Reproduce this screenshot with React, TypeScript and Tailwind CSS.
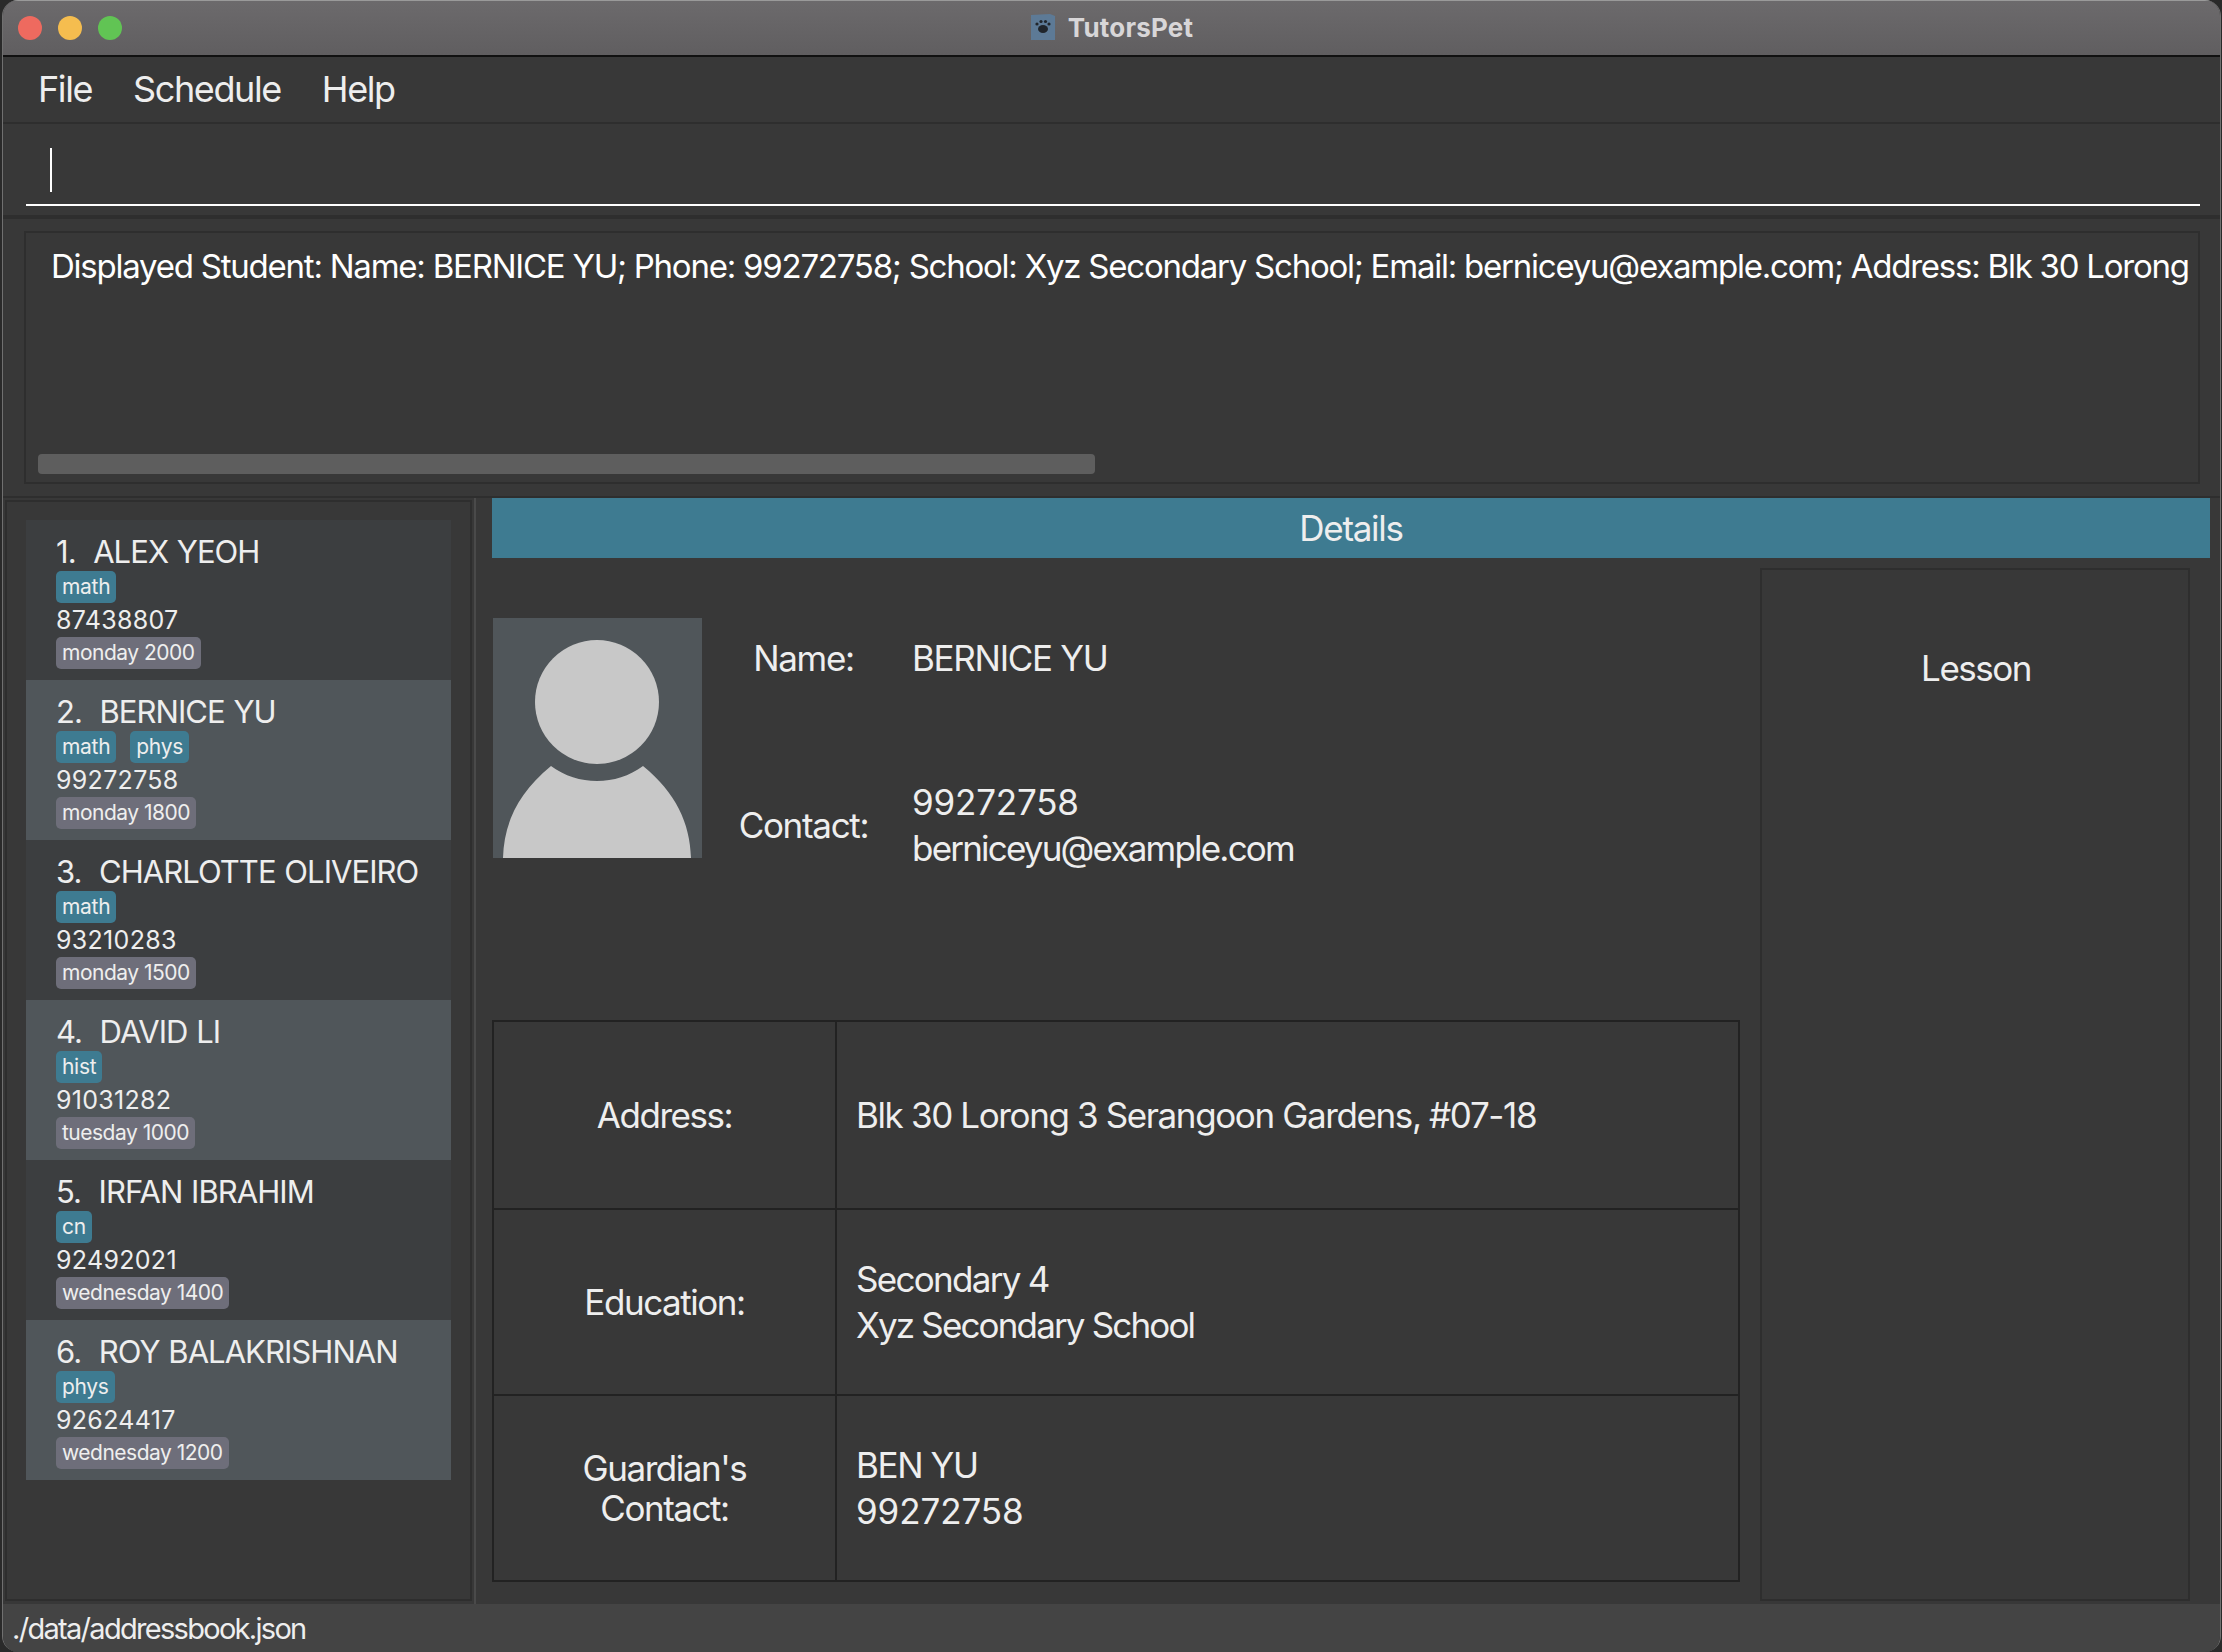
import React from 'react'

type Student = { name: string; tags: string[]; phone: string; slot: string }
type Line = { text: string; cls: string }

const STUDENTS: Student[] = [
  { name: '1.  ALEX YEOH', tags: ['math'], phone: '87438807', slot: 'monday 2000' },
  { name: '2.  BERNICE YU', tags: ['math', 'phys'], phone: '99272758', slot: 'monday 1800' },
  { name: '3.  CHARLOTTE OLIVEIRO', tags: ['math'], phone: '93210283', slot: 'monday 1500' },
  { name: '4.  DAVID LI', tags: ['hist'], phone: '91031282', slot: 'tuesday 1000' },
  { name: '5.  IRFAN IBRAHIM', tags: ['cn'], phone: '92492021', slot: 'wednesday 1400' },
  { name: '6.  ROY BALAKRISHNAN', tags: ['phys'], phone: '92624417', slot: 'wednesday 1200' },
]

const ROWS: { label: string[]; value: Line[]; height: string }[] = [
  {
    label: ['Address:'],
    value: [{ text: 'Blk 30 Lorong 3 Serangoon Gardens, #07-18', cls: 'tracking-[-1.38px]' }],
    height: 'h-[186px]',
  },
  {
    label: ['Education:'],
    value: [
      { text: 'Secondary 4', cls: 'tracking-[-1.7px]' },
      { text: 'Xyz Secondary School', cls: 'tracking-[-1.85px]' },
    ],
    height: 'h-[186px]',
  },
  {
    label: ["Guardian's", 'Contact:'],
    value: [
      { text: 'BEN YU', cls: 'tracking-[-1.4px]' },
      { text: '99272758', cls: 'tracking-[-0.1px]' },
    ],
    height: 'h-[186px]',
  },
]

function StudentCard({ s, i }: { s: Student; i: number }) {
  return (
    <div className={`h-[160px] pl-[30px] pt-[14px] ${i % 2 === 0 ? 'bg-[#3c3e40]' : 'bg-[#50565a]'}`}>
      <div className="h-[36px] whitespace-pre text-[31px] leading-[36px] tracking-[-0.95px] [word-spacing:1px] text-[#eeeeee]">{s.name}</div>
      <div className="mt-px flex gap-[14px]">
        {s.tags.map((t) => (
          <span key={t} className="flex h-[32px] items-center rounded-[5px] bg-[#3e7b91] px-[6px] text-[21px] tracking-[-0.3px] text-[#eeeeee]">{t}</span>
        ))}
      </div>
      <div className="h-[34px] text-[25px] leading-[34px] tracking-[0.3px] text-[#eeeeee]">{s.phone}</div>
      <div className="flex">
        <span className="flex h-[32px] items-center rounded-[5px] bg-[#6e6e7a] px-[6px] text-[21px] tracking-[-0.5px] text-[#eeeeee]">{s.slot}</span>
      </div>
    </div>
  )
}

function Avatar() {
  return (
    <svg width="209" height="240" viewBox="0 0 209 240" className="ml-px shrink-0">
      <rect width="209" height="240" fill="#50565a" />
      <circle cx="104" cy="84" r="62" fill="#c8c8c8" />
      <path d="M10 240 C11 205 25 175 58 148 C85 168 123 168 150 148 C183 175 197 205 198 240 Z" fill="#c8c8c8" />
    </svg>
  )
}

function AppIcon() {
  return (
    <svg width="26" height="28" viewBox="0 0 26 28">
      <path d="M1 2 L20 1 L25 3 L25 27 L1 27 Z" fill="#5d7a96" />
      <ellipse cx="13" cy="16" rx="5" ry="4" fill="#20252b" />
      <circle cx="7" cy="11" r="1.6" fill="#20252b" />
      <circle cx="11" cy="8.5" r="1.6" fill="#20252b" />
      <circle cx="15.5" cy="8.5" r="1.6" fill="#20252b" />
      <circle cx="19" cy="11" r="1.6" fill="#20252b" />
    </svg>
  )
}

export default function App() {
  return (
    <div className="h-[1652px] w-[2222px] bg-[#2a2a2a] pl-[2px] pr-px font-['Inter',sans-serif]">
      <div className="flex h-full flex-col overflow-hidden rounded-[16px] border-x border-x-[#707070] bg-[#383838]">
        {/* title bar */}
        <div className="relative flex h-[57px] shrink-0 items-center justify-center border-b-2 border-t border-b-[#111111] border-t-[#9a9a9a] bg-gradient-to-b from-[#6c6a6c] to-[#605e60] pb-[2px]">
          <div className="absolute left-[15px] top-[15px] flex gap-[16px]">
            <span className="h-[24px] w-[24px] rounded-full bg-[#ee6a5f]" />
            <span className="h-[24px] w-[24px] rounded-full bg-[#f5bd4f]" />
            <span className="h-[24px] w-[24px] rounded-full bg-[#61c454]" />
          </div>
          <div className="flex items-center gap-[12px]">
            <AppIcon />
            <span className="text-[26px] font-bold tracking-[0.2px] text-[#d8d6d8]">TutorsPet</span>
          </div>
        </div>

        {/* menu */}
        <div className="flex h-[67px] shrink-0 items-center gap-[41px] border-b-2 border-b-[#2e2e2e] pb-[2px] pl-[35px] text-[36px] tracking-[-1.4px] text-[#eeeeee]">
          <span>File</span>
          <span>Schedule</span>
          <span>Help</span>
        </div>

        {/* command box */}
        <div className="h-[95px] shrink-0 border-b-4 border-b-[#2e2e2e] pl-[23px] pr-[20px] pt-[24px]">
          <div className="h-[58px] border-b-2 border-b-[#ffffff] pl-[24px]">
            <div className="h-[44px] w-[2px] bg-[#ffffff]" />
          </div>
        </div>

        {/* result display */}
        <div className="h-[279px] shrink-0 border-b-2 border-b-[#2e2e2e] pl-[21px] pr-[20px] pt-[12px]">
          <div className="flex h-[253px] flex-col justify-between border-2 border-[#2e2e2e] pb-[8px] pl-[12px] pt-[13px]">
            <div className="whitespace-nowrap pl-[13px] text-[33px] leading-[40px] tracking-[-1.23px] text-[#ffffff]">
              Displayed Student: Name: BERNICE YU; Phone: 99272758; School: Xyz Secondary School; Email: berniceyu@example.com; Address: Blk 30 Lorong
            </div>
            <div className="h-[20px] w-[1057px] rounded-[4px] bg-[#5e5e5e]" />
          </div>
        </div>

        {/* main */}
        <div className="flex min-h-0 flex-1 bg-[#383838]">
          <div className="mb-[3px] ml-[2px] mt-[2px] w-[467px] shrink-0 border-2 border-[#2e2e2e] px-[19px] pt-[18px]">
            {STUDENTS.map((s, i) => (
              <StudentCard key={s.name} s={s} i={i} />
            ))}
          </div>
          <div className="ml-[2px] w-[2px] shrink-0 bg-[#4a4a4a]" />
          <div className="ml-[16px] flex w-[1718px] shrink-0 flex-col">
            <div className="flex h-[60px] shrink-0 items-center justify-center bg-[#3e7b91] text-[35px] tracking-[-1.3px] text-[#eeeeee]">Details</div>
            <div className="mt-[10px] flex min-h-0 flex-1">
              <div className="w-[1248px] shrink-0 pt-[50px]">
                <div className="flex h-[240px]">
                  <Avatar />
                  <div className="flex flex-col text-[35px] text-[#eeeeee]">
                    <div className="flex h-[80px] shrink-0 items-center">
                      <div className="w-[203px] text-center tracking-[-1.3px]">Name:</div>
                      <div className="pl-[7px] tracking-[-1.3px]">BERNICE YU</div>
                    </div>
                    <div className="mt-[80px] flex h-[94px] shrink-0 items-center">
                      <div className="w-[203px] text-center tracking-[-1.3px]">Contact:</div>
                      <div className="pl-[7px] leading-[46px]">
                        <div className="tracking-[-0.2px]">99272758</div>
                        <div className="tracking-[-1.8px]">berniceyu@example.com</div>
                      </div>
                    </div>
                  </div>
                </div>
                <div className="mt-[162px] border-2 border-[#222222] text-[35px] text-[#eeeeee]">
                  {ROWS.map((r, i) => (
                    <div key={r.label[0]} className={`flex ${r.height} ${i > 0 ? 'border-t-2 border-t-[#222222]' : ''}`}>
                      <div className="flex w-[343px] shrink-0 flex-col items-center justify-center border-r-2 border-r-[#222222] leading-[40px] tracking-[-1.45px]">
                        {r.label.map((l) => <div key={l}>{l}</div>)}
                      </div>
                      <div className="flex flex-col justify-center pl-[19px] leading-[46px]">
                        {r.value.map((v) => <div key={v.text} className={v.cls}>{v.text}</div>)}
                      </div>
                    </div>
                  ))}
                </div>
              </div>
              <div className="mb-[3px] ml-[20px] w-[430px] shrink-0 border-2 border-[#2e2e2e] pl-[2px] pt-[76px] text-center text-[35px] leading-[44px] tracking-[-1.5px] text-[#eeeeee]">
                Lesson
              </div>
            </div>
          </div>
        </div>

        {/* status bar */}
        <div className="flex h-[48px] shrink-0 items-center bg-[#444444] pl-[9px] pt-[2px] text-[29px] tracking-[-1.7px] text-[#eeeeee]">./data/addressbook.json</div>
      </div>
    </div>
  )
}
